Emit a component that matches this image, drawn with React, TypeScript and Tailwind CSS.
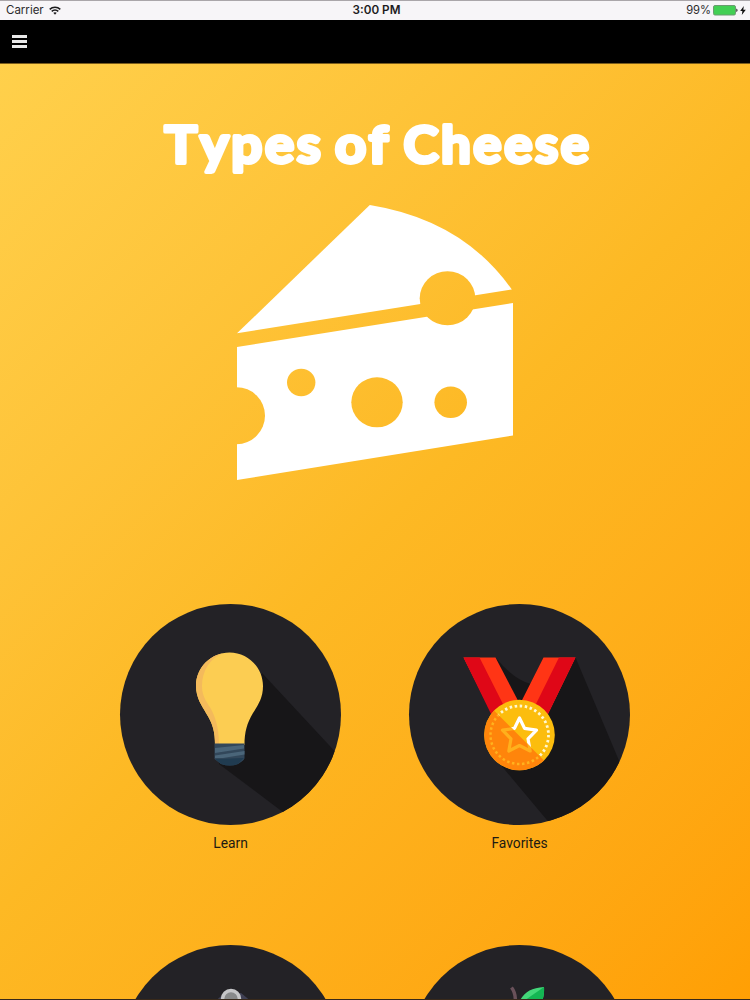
import type { ReactNode } from 'react';

interface MenuItem {
  id: string;
  label: string;
  icon: ReactNode;
}

function StatusBar() {
  return (
    <div className="grid h-5 shrink-0 grid-cols-3 items-center border-t border-[#aaa6aa] bg-[#f7f5f8] px-1.5 font-['Inter',sans-serif] text-[11.5px] leading-none text-[#2c2b2d]">
      <div className="flex items-center gap-[5px]">
        <span className="text-[11.5px]">Carrier</span>
        <svg width="12" height="9" viewBox="0 0 12 9" fill="none" stroke="#1c1b1d" strokeWidth="1.5">
          <path d="M0.7 3.4C3.7 0.4 8.3 0.4 11.3 3.4" />
          <path d="M2.7 5.4C4.6 3.6 7.4 3.6 9.3 5.4" />
          <path d="M4.3 6.8C5.2 5.9 6.8 5.9 7.7 6.8L6 8.7Z" fill="#1c1b1d" stroke="none" />
        </svg>
      </div>
      <span className="pl-[3px] text-center text-[11.7px] font-semibold text-[#1d1c1e]">3:00 PM</span>
      <div className="-mr-0.5 flex items-center justify-end gap-[2px]">
        <span className="text-[11.2px]">99%</span>
        <svg width="25" height="11" viewBox="0 0 25 11">
          <rect x="0.5" y="0.5" width="22" height="9.5" rx="1.5" fill="#42cf54" stroke="#6b9b70" />
          <path d="M23.3 3.6C25 4 25 6.6 23.3 7Z" fill="#222" />
        </svg>
        <svg width="6" height="9" viewBox="0 0 6 9">
          <path d="M3.8 0L0.2 5H2.4L1.8 9L5.8 3.8H3.3Z" fill="#111" />
        </svg>
      </div>
    </div>
  );
}

function NavBar() {
  return (
    <header className="flex h-11 shrink-0 items-center border-b border-[#7a5c1c] bg-black px-3">
      <button aria-label="Menu" className="flex w-[15px] flex-col gap-[2px]">
        <span className="h-[3px] bg-[#e8e8e8]" />
        <span className="h-[3px] bg-[#e8e8e8]" />
        <span className="h-[3px] bg-[#e8e8e8]" />
      </button>
    </header>
  );
}

// Thick round-joined strokes give the heading its soft, bubbly letters
function Title() {
  return (
    <h1 className="flex justify-center">
      <svg
        width="450"
        height="76"
        viewBox="150 114 450 76"
        className="fill-white stroke-white font-['Lato',sans-serif] text-[51px] font-bold tracking-[2.5px] [font-kerning:none]"
        strokeWidth="3.8"
        strokeLinejoin="round"
        strokeLinecap="round"
      >
        <text x="164.500" y="163" textLength="159" lengthAdjust="spacingAndGlyphs">Types</text>
        <text x="335" y="163" textLength="56" lengthAdjust="spacingAndGlyphs">of</text>
        <text x="403.500" y="163" textLength="188" lengthAdjust="spacingAndGlyphs">Cheese</text>
      </svg>
    </h1>
  );
}

function CheeseLogo() {
  return (
    <svg width="278" height="277" viewBox="236 204 278 277">
      <defs>
        <mask id="holes" maskUnits="userSpaceOnUse" x="236" y="204" width="278" height="278">
          <rect x="236" y="204" width="278" height="278" fill="#fff" />
          <ellipse cx="447.5" cy="298.3" rx="27.8" ry="27" />
          <circle cx="236.5" cy="415.7" r="28.5" />
          <ellipse cx="301.2" cy="382.5" rx="14.2" ry="13.8" />
          <ellipse cx="377" cy="402.3" rx="25.7" ry="25" />
          <ellipse cx="450.7" cy="402.3" rx="16.3" ry="15.8" />
        </mask>
      </defs>
      <g fill="#fff" mask="url(#holes)">
        <path d="M237 333.3L369.8 205Q463 220 511.8 289.5Z" />
        <path d="M237 347L513 303V435.5L237 480Z" />
      </g>
    </svg>
  );
}

function BulbIcon() {
  return (
    <>
      <path d="M142 69L235 169L180 221L99 160Z" fill="#171618" />
      <path
        d="M109.500 48.500C91 48.500 76 63.500 76 82C76 94 82 102 86 109C93 120 95 128 95 141H124.500C124.500 128 127 119 133 109C138 101 143 94 143 82C143 63.500 128 48.500 109.500 48.500Z"
        fill="#fccd52"
      />
      <path
        d="M103 49.200C88 52 76 65 76 82C76 94 82 102 86 109C93 120 95 128 95 141H99C99 128 97 117 92 107C88 99 82 94 82 82C82 67 90 54 103 49.200Z"
        fill="#f4ba5b"
      />
      <path d="M94.500 139.500H124.500V154C124.500 156 121 158 118 160Q110 163 101 160L94.500 155Z" fill="#32475a" />
      <path d="M95 144L124 141V144.500L95 149ZM95 151.500L124.500 147V150.500L103 154H95Z" fill="#4a6579" />
      <path d="M95 155L124 154L118 160Q110 163 101 160Z" fill="#203b50" />
    </>
  );
}

function MedalIcon() {
  return (
    <>
      <defs>
        <clipPath id="medal-light">
          <path d="M80 101L141 162V90H80Z" />
        </clipPath>
        <clipPath id="medal-shade">
          <path d="M74 95.500L147 168.500H70V95.500Z" />
        </clipPath>
      </defs>
      <path d="M87 54H166.700L222 185L158 240L86 154Z" fill="#171618" />
      <path d="M86 53H135L122 80Q105 76 86 53Z" fill="#232226" />
      <path d="M54.500 53.500H86.500L116 110L100 114H85Z" fill="#ff3515" />
      <path d="M54.500 53.500H70.500L98 108L84 114Z" fill="#df0717" />
      <path d="M134.500 53.500H166.500L138 112L115 108L105 112Z" fill="#ff3515" />
      <path d="M150 53.500H166.500L138 112L122 110Z" fill="#df0717" />
      <circle cx="110.500" cy="131" r="35.300" fill="#fcbd0d" />
      <circle cx="110.500" cy="131" r="35.300" fill="#ff850b" clipPath="url(#medal-shade)" />
      <g fill="none" strokeLinejoin="round">
        <g stroke="#fff8d2" clipPath="url(#medal-light)">
          <circle cx="110.500" cy="131" r="29" strokeWidth="2.800" strokeDasharray="2.500 2.561" />
        </g>
        <g stroke="#ffb21e" clipPath="url(#medal-shade)">
          <circle cx="110.500" cy="131" r="29" strokeWidth="2.500" strokeDasharray="2.500 2.561" />
        </g>
        <path
          d="M110.500 114L115.500 124.300L127.500 126.200L119 134.800L121.200 147L110.500 141.500L99.800 147L102 134.800L93.500 126.200L105.500 124.300Z"
          stroke="#ffb01c"
          strokeWidth="3.200"
        />
        <path
          d="M110.500 114L115.500 124.300L127.500 126.200L119 134.800L121.200 147L110.500 141.500L99.800 147L102 134.800L93.500 126.200L105.500 124.300Z"
          stroke="#fff"
          strokeWidth="3.200"
          clipPath="url(#medal-light)"
        />
      </g>
    </>
  );
}

function WeightIcon() {
  return (
    <>
      <path d="M88 62L105 48H121L138 62Z" fill="#3f4054" />
      <circle cx="111" cy="54" r="8.500" fill="#87898a" stroke="#c5c6c8" strokeWidth="3.500" />
    </>
  );
}

function FruitIcon() {
  return (
    <>
      <path d="M102.500 42.500C106 47 107 53 106 60" fill="none" stroke="#69515a" strokeWidth="3.500" />
      <path d="M109 60C113 49 120 43 135 42C135.500 50 134 56 130 62Z" fill="#43d779" />
      <path d="M109 60L135 42C135.500 50 134 56 130 62Z" fill="#14b653" />
    </>
  );
}

const items: MenuItem[] = [
  { id: 'learn', label: 'Learn', icon: <BulbIcon /> },
  { id: 'favorites', label: 'Favorites', icon: <MedalIcon /> },
  { id: 'weight', label: '', icon: <WeightIcon /> },
  { id: 'fruit', label: '', icon: <FruitIcon /> },
];

function MenuButton({ item }: { item: MenuItem }) {
  return (
    <button className="flex h-[341px] w-[221px] flex-col items-center">
      <svg width="221" height="221" viewBox="0 0 221 221" className="shrink-0 rounded-full bg-[#232226]">
        {item.icon}
      </svg>
      <span className="mt-[7px] font-['Roboto',sans-serif] text-[13.8px] leading-[22px] text-[#211a12]">
        {item.label}
      </span>
    </button>
  );
}

function App() {
  return (
    <div className="flex h-[1000px] w-[750px] flex-col overflow-hidden border-b border-[#38291a] bg-black">
      <StatusBar />
      <NavBar />
      <main className="flex h-[936px] shrink-0 flex-col items-center overflow-hidden bg-linear-135 from-[#ffd04b] via-[#fdb924] to-[#ff9f04] pt-[50px]">
        <Title />
        <div className="mt-[14px]">
          <CheeseLogo />
        </div>
        <div className="mt-[122.6px] grid grid-cols-2 gap-x-[68px]">
          {items.map((item) => (
            <MenuButton key={item.id} item={item} />
          ))}
        </div>
      </main>
    </div>
  );
}

export default App;
